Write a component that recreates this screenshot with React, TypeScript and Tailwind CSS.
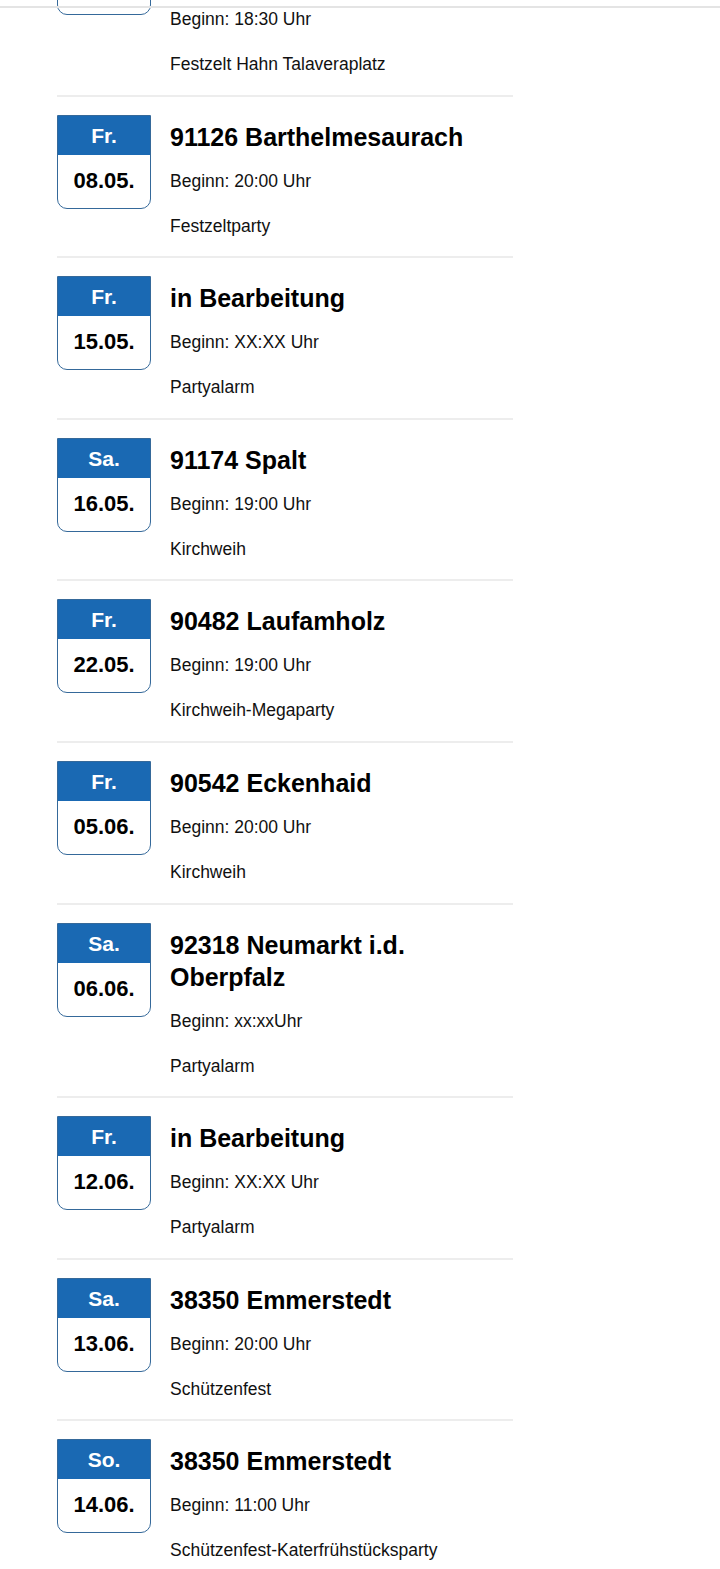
import React from 'react';

interface EventItem {
  day: string;
  date: string;
  title: string;
  time: string;
  venue: string;
}

const events: EventItem[] = [
  { day: 'Sa.', date: '02.05.', title: '80339 München Frühlingsfest', time: 'Beginn: 18:30 Uhr', venue: 'Festzelt Hahn Talaveraplatz' },
  { day: 'Fr.', date: '08.05.', title: '91126 Barthelmesaurach', time: 'Beginn: 20:00 Uhr', venue: 'Festzeltparty' },
  { day: 'Fr.', date: '15.05.', title: 'in Bearbeitung', time: 'Beginn: XX:XX Uhr', venue: 'Partyalarm' },
  { day: 'Sa.', date: '16.05.', title: '91174 Spalt', time: 'Beginn: 19:00 Uhr', venue: 'Kirchweih' },
  { day: 'Fr.', date: '22.05.', title: '90482 Laufamholz', time: 'Beginn: 19:00 Uhr', venue: 'Kirchweih-Megaparty' },
  { day: 'Fr.', date: '05.06.', title: '90542 Eckenhaid', time: 'Beginn: 20:00 Uhr', venue: 'Kirchweih' },
  { day: 'Sa.', date: '06.06.', title: '92318 Neumarkt i.d. Oberpfalz', time: 'Beginn: xx:xxUhr', venue: 'Partyalarm' },
  { day: 'Fr.', date: '12.06.', title: 'in Bearbeitung', time: 'Beginn: XX:XX Uhr', venue: 'Partyalarm' },
  { day: 'Sa.', date: '13.06.', title: '38350 Emmerstedt', time: 'Beginn: 20:00 Uhr', venue: 'Schützenfest' },
  { day: 'So.', date: '14.06.', title: '38350 Emmerstedt', time: 'Beginn: 11:00 Uhr', venue: 'Schützenfest-Katerfrühstücksparty' },
];

const DateBadge: React.FC<{ day: string; date: string }> = ({ day, date }) => (
  <div className="w-[94px] h-[94px] shrink-0 flex flex-col border-[1.5px] border-[#35699a] rounded-b-[10px] overflow-hidden bg-white">
    <div className="h-[39px] bg-[#1a69b3] flex items-center justify-center text-white text-[21px] font-bold leading-none">
      {day}
    </div>
    <div className="flex-1 flex items-center justify-center text-black text-[22px] font-bold leading-none pb-[1px]">
      {date}
    </div>
  </div>
);

export default function App() {
  return (
    <div
      className="relative h-[1569px] overflow-hidden bg-white"
      style={{ fontFamily: '"Liberation Sans", Arial, sans-serif' }}
    >
      {/* thin header edge */}
      <div className="absolute top-[6px] left-0 right-0 h-[2px] bg-[#e4e4e4] z-10" />

      <div className="mt-[-97px] ml-[57px] w-[456px] flex flex-col">
        {events.map((ev, i) => (
          <div
            key={i}
            className="flex items-start gap-[19px] pt-[18px] pb-[18.6px] border-b-2 border-[#ededed]"
          >
            <DateBadge day={ev.day} date={ev.date} />
            <div className="flex-1 pt-[6px]">
              <h3 className="text-[25px] leading-[32px] font-bold text-black">{ev.title}</h3>
              <p className="mt-[16px] text-[17.5px] leading-[24px] text-[#111]">{ev.time}</p>
              <p className="mt-[21px] text-[17.5px] leading-[24px] text-[#111]">{ev.venue}</p>
            </div>
          </div>
        ))}
      </div>
    </div>
  );
}
